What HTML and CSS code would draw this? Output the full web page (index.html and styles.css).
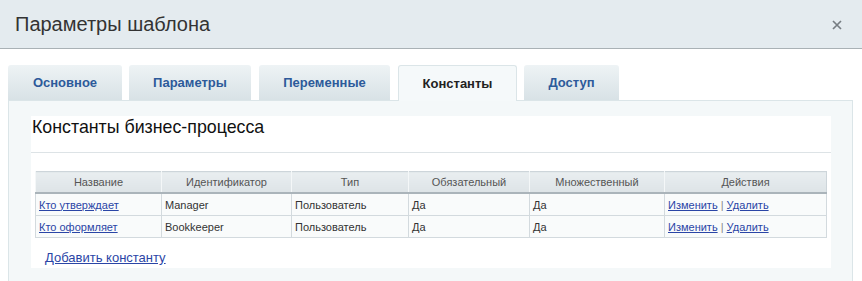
FILE: index.html
```html
<!DOCTYPE html>
<html lang="ru">
<head>
  <meta charset="UTF-8">
  <title>Параметры шаблона</title>
  <link rel="stylesheet" href="styles.css">
</head>
<body>
  <div class="dialog">
    <div class="dialog-header">
      <h1>Параметры шаблона</h1>
      <span class="close-button">
        <svg width="10" height="10" viewBox="0 0 10 10"><path d="M1 1 L9 9 M9 1 L1 9" stroke="#767d82" stroke-width="1.7" fill="none"/></svg>
      </span>
    </div>

    <div class="tabs">
      <div class="tab">Основное</div>
      <div class="tab">Параметры</div>
      <div class="tab">Переменные</div>
      <div class="tab tab-active">Константы</div>
      <div class="tab">Доступ</div>
    </div>

    <div class="tab-panel">
      <div class="section">
        <h2>Константы бизнес-процесса</h2>

        <table class="grid">
          <thead>
            <tr>
              <th class="col-name">Название</th>
              <th class="col-id">Идентификатор</th>
              <th class="col-type">Тип</th>
              <th class="col-req">Обязательный</th>
              <th class="col-multi">Множественный</th>
              <th>Действия</th>
            </tr>
          </thead>
          <tbody>
            <tr>
              <td><a href="#">Кто утверждает</a></td>
              <td>Manager</td>
              <td>Пользователь</td>
              <td>Да</td>
              <td>Да</td>
              <td><a href="#">Изменить</a> <span class="sep">|</span> <a href="#">Удалить</a></td>
            </tr>
            <tr>
              <td><a href="#">Кто оформляет</a></td>
              <td>Bookkeeper</td>
              <td>Пользователь</td>
              <td>Да</td>
              <td>Да</td>
              <td><a href="#">Изменить</a> <span class="sep">|</span> <a href="#">Удалить</a></td>
            </tr>
          </tbody>
        </table>

        <div class="add-link"><a href="#">Добавить константу</a></div>
      </div>
    </div>
  </div>
</body>
</html>
```

FILE: styles.css
```css
body {
  margin: 0;
  padding: 0;
  font-family: 'Liberation Sans', Arial, sans-serif;
  background-color: #fff;
  color: #333;
}

.dialog-header {
  display: flex;
  align-items: center;
  justify-content: space-between;
  height: 48px;
  padding: 0 20px 0 15px;
  background-color: #e4ebef;
  border-bottom: 1px solid #a9b1b5;
}

.dialog-header h1 {
  margin: 0;
  font-size: 20px;
  font-weight: normal;
  line-height: 48px;
  color: #333;
}

.close-button {
  display: flex;
  margin-top: 1px;
}

.tabs {
  display: flex;
  padding: 16px 0 0 8px;
}

.tab {
  height: 35px;
  line-height: 35px;
  box-sizing: border-box;
  text-align: center;
  font-size: 13px;
  font-weight: bold;
  color: #2d5a9a;
  border-radius: 3px 3px 0 0;
  background: linear-gradient(to bottom, #eef3f5, #d8e2e6);
}

.tab:nth-child(1) {
  width: 114px;
  margin-right: 7px;
}

.tab:nth-child(2) {
  width: 122px;
  margin-right: 8px;
}

.tab:nth-child(3) {
  width: 131px;
  margin-right: 8px;
}

.tab:nth-child(4) {
  width: 119px;
  margin-right: 7px;
}

.tab:nth-child(5) {
  width: 95px;
}

.tab-active {
  background: #f5f9fa;
  color: #222;
  border: 1px solid #dbe5e8;
  border-bottom: none;
  height: 36px;
  margin-bottom: -1px;
  position: relative;
}

.tab-panel {
  margin: 0 9px 0 8px;
  padding: 15px 21px 13px 22px;
  background-color: #f4f8f9;
  border: 1px solid #dbe5e8;
}

.section {
  background-color: #fff;
  padding: 1px 0 2px 0;
}

.section h2 {
  margin: 0 0 18px 0;
  padding: 0 0 15px 1px;
  font-size: 17.8px;
  font-weight: normal;
  line-height: 20px;
  color: #111;
  border-bottom: 1px solid #dde3e6;
}

.grid {
  width: 792px;
  margin: 0 4px;
  border-collapse: collapse;
  font-size: 11px;
  border: 1px solid #cdd5da;
}

.grid th {
  height: 20px;
  padding: 0 3px;
  font-weight: normal;
  color: #555;
  text-align: center;
  background: linear-gradient(to bottom, #e9eef0, #dde4e7);
  border-left: 1px solid #f4f7f8;
  border-bottom: 2px solid #aab4ba;
}

.grid td {
  height: 21px;
  padding: 0 3px;
  color: #333;
  background-color: #f9fbfb;
  border: 1px solid #d3dade;
}

.col-name {
  width: 119px;
}

.col-id {
  width: 123px;
}

.col-type {
  width: 110px;
}

.col-req {
  width: 114px;
}

.col-multi {
  width: 128px;
}

.grid a {
  color: #2a45a6;
}

.sep {
  color: #888;
}

.add-link {
  padding: 12px 0 0 14px;
  font-size: 13px;
  line-height: 16px;
}

.add-link a {
  color: #2a45a6;
}
```
